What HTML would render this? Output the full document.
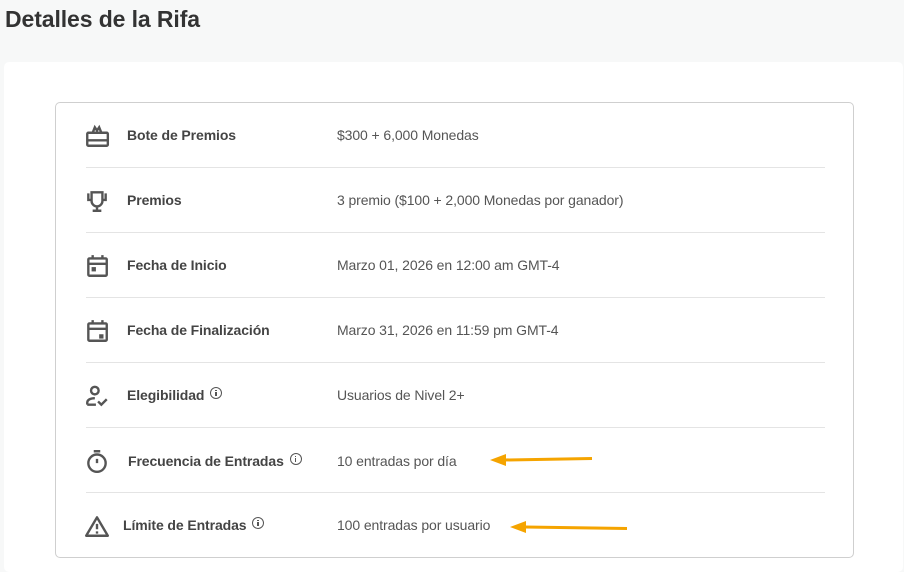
<!DOCTYPE html>
<html><head><meta charset="utf-8"><style>
*{margin:0;padding:0;box-sizing:border-box}
body{width:904px;height:565px;background:#f7f8f8;font-family:"Liberation Sans",Arial,sans-serif;position:relative;overflow:hidden}
h1{position:absolute;left:5px;top:6px;font-size:23px;font-weight:bold;color:#333;letter-spacing:-0.1px}
.card{position:absolute;left:4px;top:62px;width:899px;height:510px;background:#fff;border-radius:5px}
.box{position:absolute;left:55px;top:102px;width:799px;height:456px;border:1px solid #cfcfcf;border-radius:5px;background:#fff}
.row{position:absolute;left:30px;width:739px;height:65px;border-bottom:1px solid #e4e4e4}
.row.last{border-bottom:none}
.ic{position:absolute;left:-2px;top:20px;width:26px;height:26px}
.lb{position:absolute;left:41px;top:24px;font-size:14px;font-weight:bold;color:#444;letter-spacing:-0.1px}
.vl{position:absolute;left:251px;top:24px;font-size:14px;color:#555;letter-spacing:-0.1px}
.info{display:inline-block;width:12px;height:12px;border:1.3px solid #555;border-radius:50%;vertical-align:1px;margin-left:6px;position:relative}
.info:after{content:"";position:absolute;left:4px;top:4px;width:1.3px;height:4px;background:#555}
.info:before{content:"";position:absolute;left:4px;top:1.5px;width:1.3px;height:1.3px;background:#555}
svg.ic{fill:none;stroke:#555;stroke-width:2.2}
</style></head><body>
<h1>Detalles de la Rifa</h1>
<div class="card"></div>
<div class="box">
<div class="row" style="top:0">
<svg class="ic" viewBox="0 0 24 24"><rect x="3" y="9" width="19" height="12" rx="1"/><path d="M3 16h19M8 9l2-5 2 3 2-3 2 5"/></svg>
<div class="lb">Bote de Premios</div><div class="vl">$300 + 6,000 Monedas</div></div>
<div class="row" style="top:65px">
<svg class="ic" viewBox="0 0 24 24"><path d="M4 5v6h3M20 5v6h-3M7 4h10v8a5 5 0 0 1-10 0zM12 16v4M8 21h8"/></svg>
<div class="lb">Premios</div><div class="vl">3 premio ($100 + 2,000 Monedas por ganador)</div></div>
<div class="row" style="top:130px">
<svg class="ic" viewBox="0 0 24 24"><rect x="4" y="5" width="17" height="16" rx="1"/><path d="M4 10h17M8 2v4M17 2v4"/><rect x="7" y="13" width="4" height="4" fill="#555" stroke="none"/></svg>
<div class="lb">Fecha de Inicio</div><div class="vl">Marzo 01, 2026 en 12:00 am GMT-4</div></div>
<div class="row" style="top:195px">
<svg class="ic" viewBox="0 0 24 24"><rect x="4" y="5" width="17" height="16" rx="1"/><path d="M4 10h17M8 2v4M17 2v4"/><rect x="14" y="15" width="4" height="4" fill="#555" stroke="none"/></svg>
<div class="lb">Fecha de Finalización</div><div class="vl">Marzo 31, 2026 en 11:59 pm GMT-4</div></div>
<div class="row" style="top:260px">
<svg class="ic" viewBox="0 0 24 24"><circle cx="10" cy="7" r="3.5"/><path d="M3 20v-2c0-2.5 3-4 7-4M3 20h8M13 17l3 3 5-5"/></svg>
<div class="lb">Elegibilidad<span class="info"></span></div><div class="vl">Usuarios de Nivel 2+</div></div>
<div class="row" style="top:325px">
<svg class="ic" viewBox="0 0 24 24"><circle cx="12" cy="14" r="8"/><path d="M9 3h6M12 10v4"/></svg>
<div class="lb" style="left:42px;top:25px">Frecuencia de Entradas<span class="info"></span></div><div class="vl" style="top:25px">10 entradas por día</div></div>
<div class="row last" style="top:390px">
<svg class="ic" viewBox="0 0 24 24"><path d="M12 4L2 21h20z" stroke-linejoin="round"/><path d="M12 10v5M12 17v2"/></svg>
<div class="lb" style="left:37px">Límite de Entradas<span class="info"></span></div><div class="vl">100 entradas por usuario</div></div>
</div>
<svg style="position:absolute;left:0;top:0" width="904" height="565">
<path d="M592 458.5L505 460" stroke="#f5a400" stroke-width="3"/><path d="M490 460l16-6v12z" fill="#f5a400"/>
<path d="M627 528.5L525 527" stroke="#f5a400" stroke-width="3"/><path d="M510 527l16-6v12z" fill="#f5a400"/>
</svg>
</body></html>
